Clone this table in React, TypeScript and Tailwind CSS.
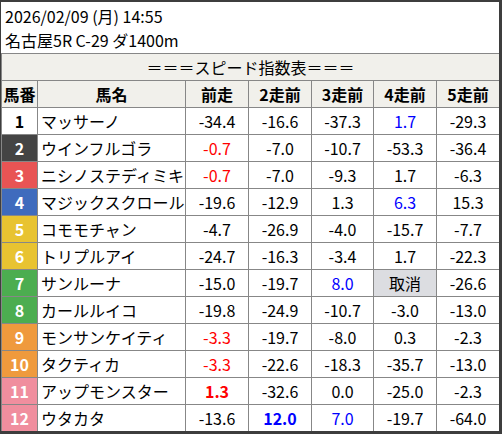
type Cell = { v: string; c?: "red" | "blue"; b?: boolean; cancel?: boolean };

interface Horse {
  no: number;
  name: string;
  frame: string;
  cells: Cell[];
}

const FRAME: Record<string, string> = {
  w: "bg-white text-black",
  k: "bg-[#444444] text-white",
  r: "bg-[#e85454] text-white",
  b: "bg-[#3f6bbd] text-white",
  y: "bg-[#e8c331] text-white",
  g: "bg-[#4cad50] text-white",
  o: "bg-[#ef9a3d] text-white",
  p: "bg-[#f08e9e] text-white",
};

const horses: Horse[] = [
  { no: 1, name: "マッサーノ", frame: "w", cells: [{ v: "-34.4" }, { v: "-16.6" }, { v: "-37.3" }, { v: "1.7", c: "blue" }, { v: "-29.3" }] },
  { no: 2, name: "ウインフルゴラ", frame: "k", cells: [{ v: "-0.7", c: "red" }, { v: "-7.0" }, { v: "-10.7" }, { v: "-53.3" }, { v: "-36.4" }] },
  { no: 3, name: "ニシノステディミキ", frame: "r", cells: [{ v: "-0.7", c: "red" }, { v: "-7.0" }, { v: "-9.3" }, { v: "1.7" }, { v: "-6.3" }] },
  { no: 4, name: "マジックスクロール", frame: "b", cells: [{ v: "-19.6" }, { v: "-12.9" }, { v: "1.3" }, { v: "6.3", c: "blue" }, { v: "15.3" }] },
  { no: 5, name: "コモモチャン", frame: "y", cells: [{ v: "-4.7" }, { v: "-26.9" }, { v: "-4.0" }, { v: "-15.7" }, { v: "-7.7" }] },
  { no: 6, name: "トリプルアイ", frame: "y", cells: [{ v: "-24.7" }, { v: "-16.3" }, { v: "-3.4" }, { v: "1.7" }, { v: "-22.3" }] },
  { no: 7, name: "サンルーナ", frame: "g", cells: [{ v: "-15.0" }, { v: "-19.7" }, { v: "8.0", c: "blue" }, { v: "取消", cancel: true }, { v: "-26.6" }] },
  { no: 8, name: "カールルイコ", frame: "g", cells: [{ v: "-19.8" }, { v: "-24.9" }, { v: "-10.7" }, { v: "-3.0" }, { v: "-13.0" }] },
  { no: 9, name: "モンサンケイティ", frame: "o", cells: [{ v: "-3.3", c: "red" }, { v: "-19.7" }, { v: "-8.0" }, { v: "0.3" }, { v: "-2.3" }] },
  { no: 10, name: "タクティカ", frame: "o", cells: [{ v: "-3.3", c: "red" }, { v: "-22.6" }, { v: "-18.3" }, { v: "-35.7" }, { v: "-13.0" }] },
  { no: 11, name: "アップモンスター", frame: "p", cells: [{ v: "1.3", c: "red", b: true }, { v: "-32.6" }, { v: "0.0" }, { v: "-25.0" }, { v: "-2.3" }] },
  { no: 12, name: "ウタカタ", frame: "p", cells: [{ v: "-13.6" }, { v: "12.0", c: "blue", b: true }, { v: "7.0", c: "blue" }, { v: "-19.7" }, { v: "-64.0" }] },
];

const heads = ["前走", "2走前", "3走前", "4走前", "5走前"];

function valueClass(cell: Cell) {
  const color = cell.c === "red" ? "text-[#ff0000]" : cell.c === "blue" ? "text-[#0000ff]" : "text-black";
  const bg = cell.cancel ? "bg-[#dcdde1]" : "bg-white";
  return `${color} ${bg} ${cell.b ? "font-bold" : ""}`;
}

export default function App() {
  return (
    <div
      className="h-[434px] w-[502px] bg-[#3d3d3d] pt-[2px] pr-[3px] pb-[3px] pl-[1px]"
      style={{ fontFamily: '"Noto Sans CJK JP", "Noto Sans", sans-serif' }}
    >
      <div className="h-full overflow-hidden bg-white">
        <div className="pt-[2px] pb-[1px] pl-[4px] text-[16px] leading-[24px] text-black">
          <div>2026/02/09 (月) 14:55</div>
          <div>名古屋5R C-29 ダ1400m</div>
        </div>
        <table className="w-[498px] table-fixed border-collapse text-[16px] leading-[20px]">
          <colgroup>
            <col className="w-[36px]" />
            <col className="w-[148px]" />
            <col className="w-[63px]" />
            <col className="w-[63px]" />
            <col className="w-[62px]" />
            <col className="w-[63px]" />
            <col className="w-[63px]" />
          </colgroup>
          <tbody>
            <tr>
              <td colSpan={7} className="h-[27px] border border-[#878787] bg-[#f1f0eb] p-0 text-center">
                ＝＝＝スピード指数表＝＝＝
              </td>
            </tr>
            <tr className="font-bold">
              <td className="h-[27px] border border-[#878787] bg-[#f1f0eb] p-0 text-center">馬番</td>
              <td className="border border-[#878787] bg-[#f1f0eb] p-0 text-center">馬名</td>
              {heads.map((h) => (
                <td key={h} className="border border-[#878787] bg-[#f1f0eb] p-0 text-center">
                  {h}
                </td>
              ))}
            </tr>
            {horses.map((h) => (
              <tr key={h.no}>
                <td className={`h-[27px] border border-[#878787] p-0 text-center font-bold ${FRAME[h.frame]}`}>
                  {h.no}
                </td>
                <td className="border border-[#878787] bg-white py-0 pr-0 pl-[3px] text-left whitespace-nowrap">
                  {h.name}
                </td>
                {h.cells.map((c, i) => (
                  <td key={i} className={`border border-[#878787] p-0 text-center ${valueClass(c)}`}>
                    {c.v}
                  </td>
                ))}
              </tr>
            ))}
          </tbody>
        </table>
      </div>
    </div>
  );
}
